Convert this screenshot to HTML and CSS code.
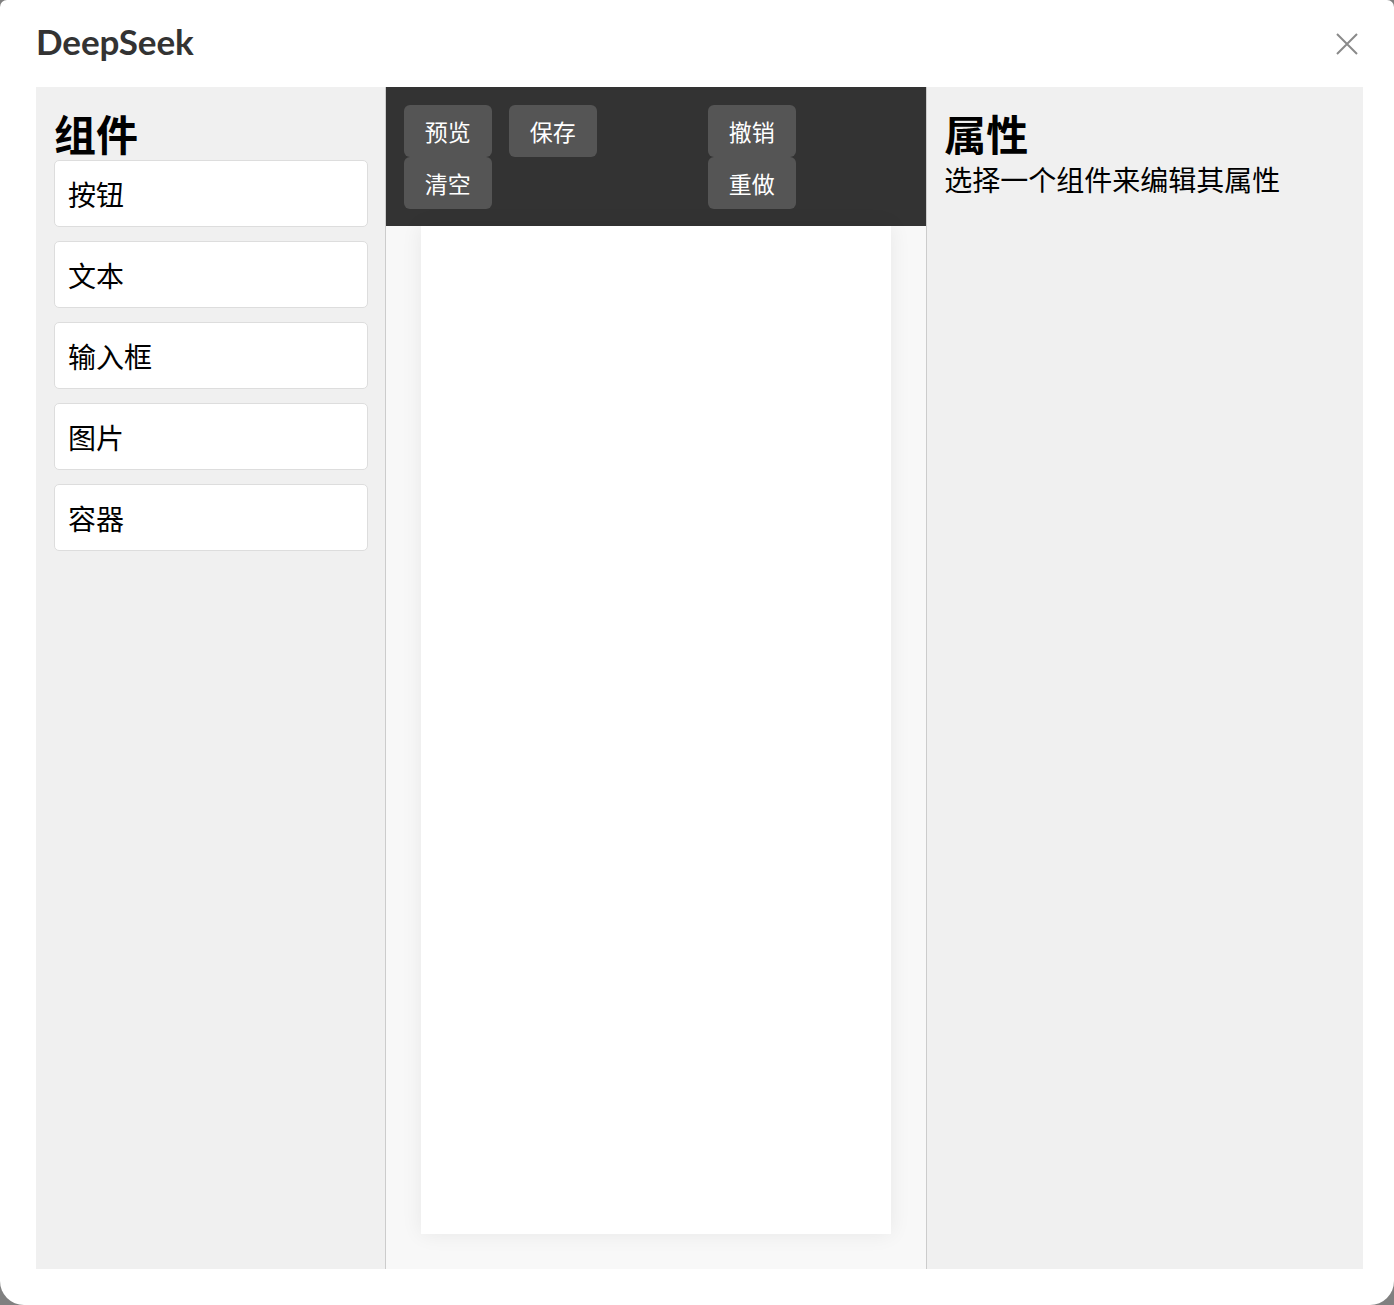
FILE: index.html
```html
<!DOCTYPE html>
<html lang="zh-CN">
<head>
<meta charset="utf-8">
<title>DeepSeek</title>
<link rel="stylesheet" href="styles.css">
</head>
<body>
<div class="dialog">
  <header class="dialog-header">
    <div class="dialog-title">DeepSeek</div>
    <button class="close-btn" aria-label="关闭">
      <svg width="22" height="22" viewBox="0 0 22 22"><path d="M1 1 L21 21 M21 1 L1 21" stroke="#8a8a8a" stroke-width="2" fill="none"/></svg>
    </button>
  </header>
  <main class="editor">
    <aside class="panel components">
      <h2 class="panel-title">组件</h2>
      <div class="comp-item">按钮</div>
      <div class="comp-item">文本</div>
      <div class="comp-item">输入框</div>
      <div class="comp-item">图片</div>
      <div class="comp-item">容器</div>
    </aside>
    <section class="workspace">
      <div class="toolbar">
        <div class="tool-group left-group">
          <button class="tool-btn">预览</button>
          <button class="tool-btn">保存</button>
          <button class="tool-btn">清空</button>
        </div>
        <div class="tool-group right-group">
          <button class="tool-btn">撤销</button>
          <button class="tool-btn">重做</button>
        </div>
      </div>
      <div class="canvas-wrap">
        <div class="canvas"></div>
      </div>
    </section>
    <aside class="panel properties">
      <h2 class="panel-title">属性</h2>
      <p class="hint">选择一个组件来编辑其属性</p>
    </aside>
  </main>
</div>
</body>
</html>
```
FILE: styles.css
```css
html, body {
  margin: 0;
  padding: 0;
}
body {
  background: #808080;
  font-family: "Noto Sans CJK SC", "Noto Sans", sans-serif;
  color: #000;
}
.dialog {
  width: 1394px;
  height: 1305px;
  background: #fff;
  border-radius: 7px 7px 24px 24px;
  box-sizing: border-box;
  display: flex;
  flex-direction: column;
  padding: 0 31px 36px 36px;
}
.dialog-header {
  height: 87px;
  display: flex;
  align-items: center;
  justify-content: space-between;
  flex-shrink: 0;
}
.dialog-title {
  font-family: "Lato", "Open Sans", sans-serif;
  font-weight: 700;
  font-size: 35px;
  color: #333;
  margin-top: -5px;
  letter-spacing: -0.1px;
}
.close-btn {
  background: none;
  border: 0;
  padding: 0;
  margin: 0 5px 0 0;
  width: 22px;
  height: 22px;
  display: flex;
}
.editor {
  flex: 1;
  display: flex;
  min-height: 0;
}
.panel {
  background: #f0f0f0;
  padding: 18px 17px 18px 18px;
  box-sizing: border-box;
}
.components {
  width: 350px;
  border-right: 1px solid #cccccc;
}
.properties {
  width: 436px;
  padding-left: 17px;
}
.panel-title {
  margin: 0;
  font-size: 42px;
  line-height: 55px;
  font-weight: 700;
}
.comp-item {
  height: 67px;
  box-sizing: border-box;
  background: #fff;
  border: 1px solid #dddddd;
  border-radius: 5px;
  padding: 0 13px;
  display: flex;
  align-items: center;
  font-size: 28px;
  margin-bottom: 14px;
}
.hint {
  margin: 0;
  font-size: 28px;
  line-height: 38px;
}
.workspace {
  width: 541px;
  border-right: 1px solid #cccccc;
  background: #f8f8f8;
  display: flex;
  flex-direction: column;
}
.toolbar {
  background: #333333;
  padding: 18px 18px 17px 18px;
  display: flex;
}
.tool-group {
  display: flex;
  flex-wrap: wrap;
  column-gap: 17px;
  align-content: flex-start;
}
.left-group {
  width: 193px;
}
.right-group {
  width: 88px;
  margin-left: 111px;
}
.tool-btn {
  width: 88px;
  height: 52px;
  background: #555555;
  color: #fff;
  border: 0;
  border-radius: 6px;
  font-family: "Noto Sans CJK SC", sans-serif;
  font-size: 23px;
  padding: 0;
}
.canvas-wrap {
  flex: 1;
  padding: 0 35px 35px 35px;
  display: flex;
}
.canvas {
  flex: 1;
  background: #fff;
  box-shadow: 0 0 20px rgba(0, 0, 0, 0.07);
}
```
